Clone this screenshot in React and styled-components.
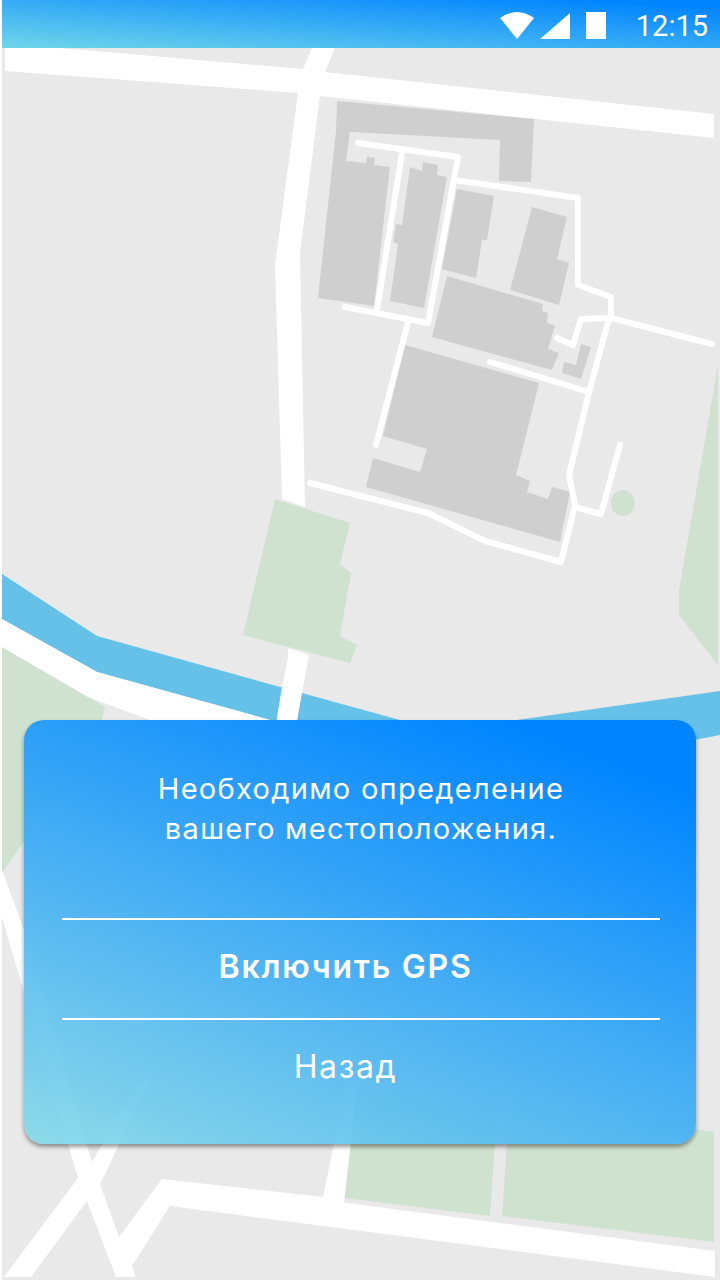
import styled, { createGlobalStyle } from 'styled-components'

const GlobalStyle = createGlobalStyle`
  html, body {
    margin: 0;
    padding: 0;
    background: #ffffff;
  }
  * {
    box-sizing: border-box;
  }
`

const colors = {
  ground: '#e9e9e9',
  building: '#cfcfcf',
  park: '#cfe2cf',
  river: '#65c1e8',
  road: '#ffffff',
}

// Map data, in page coordinates
const parks = [
  '275,499 350,523 340,564 351,573 340,636 357,645 350,663 243,635',
  '2,647 88,697 105,707 99,733 23,843 2,873',
  '718,365 679,590 679,615 718,665',
  '350,1100 498,1100 490,1216 336,1197',
  '510,1100 714,1132 714,1242 502,1216',
]

const buildings = [
  '337,101 534,119 531,182 499,181 500,140 350,132 346,161 366,163 367,157 375,158 374,165 390,167 374,306 318,298 336,131',
  '410,167 422,171 423,162 438,165 437,175 447,177 424,308 390,301 398,244 393,242 396,224 402,225',
  '457,189 494,196 487,240 482,240 476,278 442,269',
  '532,207 567,217 557,259 569,263 559,305 510,290',
  '447,276 543,304 542,311 548,313 547,323 555,326 548,349 559,353 552,370 432,337',
  '581,344 591,347 581,379 562,373 564,362 576,365',
  '405,345 539,383 516,475 530,481 527,492 548,499 552,487 570,492 560,542 366,487 373,458 420,472 427,449 383,436',
]

const roads = [
  '5,48 60,48 303,69 312,48 335,48 325,72 714,114 714,138 320,96 300,253 305,507 282,499 275,265 298,93 5,71',
  '2,619 97,672 270,720 420,770 150,720 88,697 2,647',
  '288,648 309,655 302,693 290,760 270,760 282,687 288,658',
  '162,1179 323,1197 347,1203 715,1251 715,1277 170,1206 132,1266 136,1277 116,1277 87,1201 31,1277 4,1277 78,1178 2,917 2,870 24,930 92,1162 128,1100 160,1060 100,1184 119,1237',
  '323,1197 347,1080 358,1080 344,1203',
]

const paths = [
  '358,143 458,157 428,323 345,307',
  '402,153 377,310',
  '454,180 578,198 578,285 611,297 611,318',
  '557,338 573,345 581,319 611,318 712,344',
  '408,322 376,445',
  '490,362 589,392',
  '608,322 589,392 569,475 575,505 561,562 485,541 428,513 310,483',
  '575,507 601,514 620,445',
]

const Screen = styled.div`
  display: flex;
  flex-direction: column;
  width: 720px;
  height: 1280px;
  padding-left: 2px;
  overflow: hidden;
  background: #ffffff;
`

const StatusBar = styled.header`
  display: flex;
  align-items: center;
  justify-content: flex-end;
  flex: none;
  height: 48px;
  padding: 3px 12px 0 0;
  background: linear-gradient(184deg, #0084ff 8%, #70d6ea 100%);
`

const StatusIcon = styled.svg`
  display: block;
  flex: none;
  margin-right: ${props => props.$gap}px;
`

const Clock = styled.span`
  font-family: Roboto, sans-serif;
  font-size: 29px;
  line-height: 32px;
  color: #ffffff;
`

const MapArea = styled.main`
  position: relative;
  display: flex;
  flex-direction: column;
  justify-content: flex-end;
  flex: 1;
  padding: 0 24px 136px 22px;
`

const MapDrawing = styled.svg`
  position: absolute;
  inset: 0;
  display: block;
`

const Dialog = styled.section`
  position: relative;
  display: flex;
  flex-direction: column;
  height: 424px;
  padding: 0 36px 0 38px;
  border-radius: 20px;
  background: linear-gradient(201deg, #0084ff 10%, rgba(132, 216, 232, 0.9) 100%);
  box-shadow: 0 3px 4px rgba(0, 0, 0, 0.4);
  font-family: Inter, "Noto Sans", sans-serif;
  color: #ffffff;
`

const Message = styled.p`
  flex: none;
  height: 200px;
  margin: 0;
  padding-top: 49px;
  border-bottom: 2px solid #ffffff;
  font-size: 29px;
  font-weight: 400;
  line-height: 40px;
  letter-spacing: 1.3px;
  text-align: center;
`

const Action = styled.button`
  display: block;
  flex: none;
  width: 100%;
  height: ${props => props.$height}px;
  padding: 0 31px 6px 0;
  border: none;
  border-bottom: ${props => (props.$divided ? '2px solid #ffffff' : 'none')};
  background: transparent;
  font-family: inherit;
  font-size: 32px;
  font-weight: ${props => (props.$strong ? 600 : 400)};
  letter-spacing: ${props => (props.$strong ? 1.75 : 1.6)}px;
  color: inherit;
`

function MapBackground() {
  return (
    <MapDrawing width="718" height="1232" viewBox="2 48 718 1232">
      <rect x="2" y="48" width="718" height="1232" fill={colors.ground} />
      {parks.map(points => (
        <polygon key={points} points={points} fill={colors.park} />
      ))}
      <ellipse cx="623" cy="503" rx="12" ry="13" fill={colors.park} />
      <polygon
        points="2,574 97,636 280,687 440,731 720,691 720,735 440,790 400,760 270,720 97,672 2,619"
        fill={colors.river}
      />
      {buildings.map(points => (
        <polygon key={points} points={points} fill={colors.building} />
      ))}
      {roads.map(points => (
        <polygon key={points} points={points} fill={colors.road} />
      ))}
      {paths.map(points => (
        <polyline
          key={points}
          points={points}
          fill="none"
          stroke={colors.road}
          strokeWidth="6"
          strokeLinecap="round"
          strokeLinejoin="round"
        />
      ))}
    </MapDrawing>
  )
}

export default function App() {
  return (
    <Screen>
      <GlobalStyle />
      <StatusBar>
        <StatusIcon $gap={6} width="34" height="28" viewBox="0 0 34 28">
          <path d="M0 6 Q17 -6 34 6 L17 27 Z" fill="#ffffff" />
        </StatusIcon>
        <StatusIcon $gap={16} width="30" height="26" viewBox="0 0 30 26">
          <polygon points="0,26 30,0 30,26" fill="#ffffff" />
        </StatusIcon>
        <StatusIcon $gap={30} width="20" height="27" viewBox="0 0 20 27">
          <rect width="20" height="27" fill="#ffffff" />
        </StatusIcon>
        <Clock>12:15</Clock>
      </StatusBar>
      <MapArea>
        <MapBackground />
        <Dialog>
          <Message>
            Необходимо определение
            <br />
            вашего местоположения.
          </Message>
          <Action $height={100} $divided $strong>Включить GPS</Action>
          <Action $height={98}>Назад</Action>
        </Dialog>
      </MapArea>
    </Screen>
  )
}
